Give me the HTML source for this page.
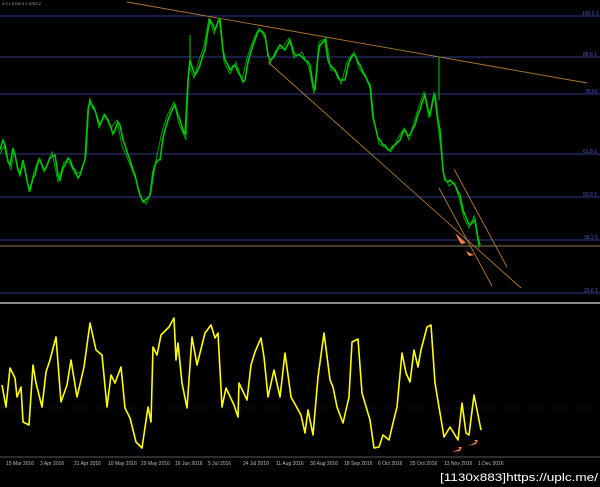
<!DOCTYPE html>
<html><head><meta charset="utf-8"><style>
html,body{margin:0;padding:0;background:#000;width:600px;height:487px;overflow:hidden}
svg{display:block}
text{font-family:"Liberation Sans",sans-serif}
</style></head><body>
<svg width="600" height="487" viewBox="0 0 600 487" xmlns="http://www.w3.org/2000/svg">
<rect width="600" height="487" fill="#000"/>
<text x="2" y="5" font-size="4" fill="#aaa">0.0 1.0763.4 1.0753.2</text>
<g stroke="#2e3a88" stroke-width="1">
<line x1="0" y1="16" x2="600" y2="16"/><line x1="0" y1="57" x2="600" y2="57"/>
<line x1="0" y1="94" x2="600" y2="94"/><line x1="0" y1="154" x2="600" y2="154"/>
<line x1="0" y1="197" x2="600" y2="197"/><line x1="0" y1="240" x2="600" y2="240"/>
<line x1="0" y1="293" x2="600" y2="293"/>
</g>
<g font-size="5" fill="#4a5fc0">
<text x="582" y="15">100.0 1</text><text x="583" y="56">88.6 1</text>
<text x="585" y="93">78.61</text><text x="583" y="153">61.8 1</text>
<text x="583" y="196">50.0 1</text><text x="584" y="239">38.2 1</text>
<text x="584" y="292">23.6 1</text>
</g>
<line x1="0" y1="246" x2="600" y2="246" stroke="#8a7a50" stroke-width="1"/>
<g stroke="#b07a30" stroke-width="0.9">
<line x1="127" y1="2" x2="587" y2="83"/>
<line x1="268" y1="62" x2="521" y2="288"/>
<line x1="439" y1="188" x2="492" y2="286"/>
<line x1="454" y1="169" x2="507" y2="267"/>
</g>
<g fill="none" stroke="#00c800" stroke-linejoin="miter">
<polyline stroke-width="1.6" points="0,150 3,140 5,145 8,162 10,165 13,148 15,155 18,170 20,175 23,160 25,170 28,185 30,190 33,178 35,175 38,162 40,160 43,168 45,170 50,158 55,155 58,175 60,180 63,168 65,165 68,158 70,160 73,168 75,170 78,178 80,175 83,165 85,160 88,110 90,100 93,108 95,110 98,120 100,125 103,118 105,115 108,120 110,125 113,134 115,130 118,122 120,125 123,140 125,145 128,155 130,160 133,170 135,175 138,188 140,195 143,202 145,200 148,198 150,195 153,172 155,165 158,160 160,160 163,138 165,130 168,120 170,115 173,108 175,105 178,115 180,120 183,130 185,135 188,80 190,60 193,70 195,75 198,70 200,65 203,55 205,50 208,30 210,20 213,25 215,30 218,22 220,20 223,50 225,60 228,65 230,70 233,66 235,65 238,72 240,75 243,82 245,80 248,62 250,55 253,45 255,40 258,32 260,30 263,32 265,35 268,55 270,60 273,58 275,55 278,48 280,45 283,48 285,50 288,44 290,40 293,50 295,55 300,55 303,58 305,60 308,62 310,65 313,85 315,90 318,55 320,45 323,42 325,40 328,60 330,65 333,68 335,70 338,78 340,80 345,80 348,66 350,60 353,55 355,55 358,62 360,65 363,72 365,75 368,82 370,85 373,118 375,125 378,138 380,140 383,145 385,145 388,150 390,150 393,146 395,145 398,142 400,140 403,132 405,130 408,136 410,135 413,128 415,125 418,114 420,110 423,100 425,95 428,110 430,115 433,100 435,95 438,120 440,130 443,170 445,180 448,182 450,180 453,183 455,185 458,192 460,195 463,210 465,215 468,222 470,225 473,222 475,220 478,238 480,245"/>
<polyline stroke-width="1" opacity="0.8" points="0,154 4,146 7,158 11,170 14,152 19,172 24,166 29,192 34,172 39,158 44,172 52,152 58,182 64,162 69,162 75,174 81,172 86,156 89,104 94,106 99,128 104,114 111,128 117,120 122,146 129,162 136,180 141,198 146,204 151,192 156,160 162,132 167,116 174,102 179,124 186,140 189,66 194,78 199,60 204,46 209,18 214,34 219,18 224,62 230,74 236,62 242,80 247,58 254,38 259,28 266,40 270,64 276,50 282,48 289,38 294,58 302,52 309,68 314,94 319,42 326,38 331,70 337,72 341,84 347,62 354,52 359,68 366,78 371,90 374,120 379,144 386,148 391,152 397,140 404,128 409,140 414,122 419,106 424,92 429,118 434,92 439,134 444,176 449,186 454,182 459,198 464,218 469,228 474,216 479,248"/>
</g>
<line x1="439" y1="57" x2="439" y2="100" stroke="#00c800" stroke-width="1"/>
<line x1="190" y1="35" x2="190" y2="70" stroke="#00c800" stroke-width="1"/>
<polygon points="455,233 466,243 461,244" fill="#ff7f40"/>
<polygon points="466,251 474,255 469,256" fill="#ff7f40"/>
<rect x="0" y="302" width="600" height="2" fill="#888"/>
<line x1="0" y1="408" x2="600" y2="408" stroke="#333" stroke-width="0.7" stroke-dasharray="1,2"/>
<polyline fill="none" stroke="#ffff00" stroke-width="1.6" stroke-linejoin="round" points="2,385 6,407 10,368 15,378 17,397 21,387 23,422 29,425 33,365 36,383 42,407 46,372 50,360 56,337 61,402 67,385 71,360 77,397 84,367 90,323 96,350 102,355 107,407 111,375 115,383 121,367 125,408 130,418 136,442 142,448 148,407 151,422 153,347 157,355 161,335 169,327 174,318 176,360 178,343 182,383 187,408 192,337 197,365 205,333 211,325 215,338 218,333 222,407 226,388 234,405 238,417 239,383 247,400 251,365 255,352 261,338 264,357 268,397 274,370 280,397 285,353 291,397 301,415 305,433 308,410 313,435 318,377 324,333 330,380 333,387 337,407 343,423 349,397 352,342 358,339 362,393 370,420 374,448 379,447 383,435 389,440 393,423 397,407 402,353 406,373 410,382 414,350 418,367 421,350 427,327 431,325 435,383 439,407 444,437 450,427 458,440 462,403 466,433 469,435 474,395 481,430"/>
<polygon points="452,452 460,449 458,447 462,447 460,451" fill="#ff7f40"/>
<polygon points="468,446 476,442 474,440 478,440 476,444" fill="#ff7f40"/>
<line x1="0" y1="457" x2="600" y2="457" stroke="#777" stroke-width="0.8"/>
<g font-size="5" fill="#bbb">
<text x="6" y="465">15 Mar 2016</text><text x="40" y="465">3 Apr 2016</text>
<text x="74" y="465">21 Apr 2016</text><text x="108" y="465">10 May 2016</text>
<text x="141" y="465">29 May 2016</text><text x="175" y="465">16 Jun 2016</text>
<text x="208" y="465">5 Jul 2016</text><text x="243" y="465">24 Jul 2016</text>
<text x="276" y="465">11 Aug 2016</text><text x="310" y="465">30 Aug 2016</text>
<text x="344" y="465">18 Sep 2016</text><text x="378" y="465">6 Oct 2016</text>
<text x="410" y="465">25 Oct 2016</text><text x="444" y="465">13 Nov 2016</text>
<text x="478" y="465">1 Dec 2016</text>
</g>
<text x="440" y="481" font-size="11" fill="#fff" font-family="Liberation Mono, monospace" textLength="158" lengthAdjust="spacingAndGlyphs">[1130x883]https://uplc.me/</text>
</svg>
</body></html>
